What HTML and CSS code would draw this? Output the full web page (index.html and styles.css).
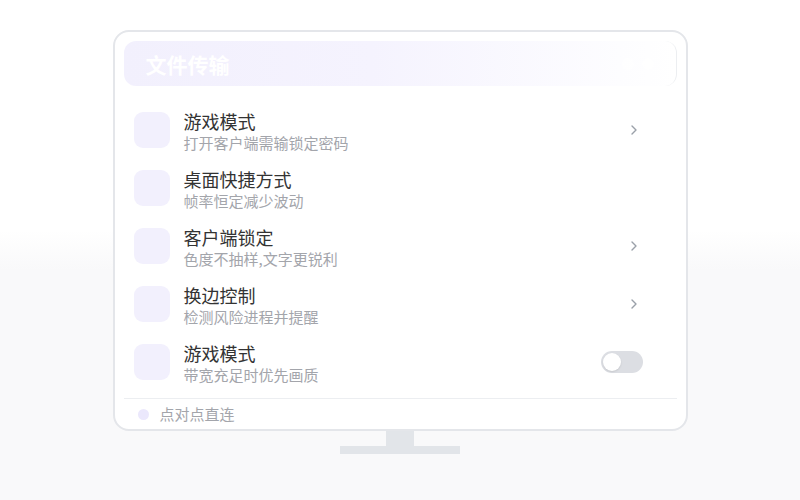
FILE: index.html
```html
<!DOCTYPE html>
<html lang="zh">
<head>
<meta charset="utf-8">
<title>文件传输</title>
<link rel="stylesheet" href="styles.css">
</head>
<body>
<div class="stage">
  <div class="monitor">
    <div class="header">
      <span class="title">文件传输</span>
      <span class="header-dots"><i></i><i></i></span>
    </div>
    <ul class="list">
      <li class="row">
        <span class="ico"></span>
        <span class="txt"><span class="t">游戏模式</span><span class="s">打开客户端需输锁定密码</span></span>
        <span class="chev"><svg width="8" height="12" viewBox="0 0 8 12"><path d="M2 2l4 4-4 4" fill="none" stroke="#9aa0a9" stroke-width="1.4" stroke-linecap="round" stroke-linejoin="round"/></svg></span>
      </li>
      <li class="row">
        <span class="ico"></span>
        <span class="txt"><span class="t">桌面快捷方式</span><span class="s">帧率恒定减少波动</span></span>
      </li>
      <li class="row">
        <span class="ico"></span>
        <span class="txt"><span class="t">客户端锁定</span><span class="s">色度不抽样,文字更锐利</span></span>
        <span class="chev"><svg width="8" height="12" viewBox="0 0 8 12"><path d="M2 2l4 4-4 4" fill="none" stroke="#9aa0a9" stroke-width="1.4" stroke-linecap="round" stroke-linejoin="round"/></svg></span>
      </li>
      <li class="row">
        <span class="ico"></span>
        <span class="txt"><span class="t">换边控制</span><span class="s">检测风险进程并提醒</span></span>
        <span class="chev"><svg width="8" height="12" viewBox="0 0 8 12"><path d="M2 2l4 4-4 4" fill="none" stroke="#9aa0a9" stroke-width="1.4" stroke-linecap="round" stroke-linejoin="round"/></svg></span>
      </li>
      <li class="row">
        <span class="ico"></span>
        <span class="txt"><span class="t">游戏模式</span><span class="s">带宽充足时优先画质</span></span>
        <span class="toggle"><span class="knob"></span></span>
      </li>
    </ul>
    <div class="footer">
      <span class="dot"></span>
      <span class="ftxt">点对点直连</span>
    </div>
  </div>
  <div class="neck"></div>
  <div class="base"></div>
</div>
</body>
</html>
```

FILE: styles.css
```css
html, body {
  margin: 0;
  padding: 0;
}
body {
  width: 800px;
  height: 500px;
  overflow: hidden;
  background: linear-gradient(to bottom, #ffffff 0%, #ffffff 46%, #f9f9fa 54%, #f9f9fa 100%);
  font-family: "Noto Sans CJK SC", "Noto Sans", sans-serif;
}
.stage {
  display: flex;
  flex-direction: column;
  align-items: center;
  padding-top: 30px;
}
.monitor {
  box-sizing: border-box;
  width: 575px;
  height: 401px;
  border: 2px solid #e4e6ea;
  border-radius: 16px;
  background: #fff;
  padding: 9px 9px 0 9px;
  display: flex;
  flex-direction: column;
}
.header {
  flex: none;
  height: 45px;
  border-radius: 12px;
  background: linear-gradient(to right, #f2f0fd 0%, #f5f3fe 45%, #fdfdff 90%, #ffffff 100%);
  display: flex;
  align-items: center;
  justify-content: space-between;
  padding: 0 0 0 22px;
  border-right: 1px solid #eceef1;
}
.title {
  color: #ffffff;
  font-size: 21px;
  font-weight: 700;
  line-height: 26px;
}
.header-dots {
  display: flex;
  gap: 8px;
  margin-right: 22px;
}
.header-dots i {
  width: 12px;
  height: 12px;
  border-radius: 50%;
  background: #ffffff;
  opacity: 0.6;
}
.list {
  list-style: none;
  margin: 0;
  padding: 26px 0 0 0;
  display: flex;
  flex-direction: column;
  gap: 18px;
}
.row {
  display: flex;
  align-items: flex-start;
  padding: 0 33px 0 10px;
  height: 40px;
}
.ico {
  width: 36px;
  height: 36px;
  border-radius: 9px;
  background: #f2f0fd;
  flex: none;
}
.txt {
  display: flex;
  flex-direction: column;
  margin-left: 14px;
  flex: 1;
  margin-top: -2px;
}
.t {
  font-size: 18px;
  line-height: 22px;
  color: #333333;
}
.s {
  font-size: 15px;
  line-height: 19px;
  color: #a3a5ab;
  margin-top: 1px;
}
.chev {
  display: flex;
  align-items: center;
  height: 36px;
  margin-right: 6px;
}
.toggle {
  position: relative;
  width: 42px;
  height: 22px;
  border-radius: 11px;
  background: #dcdee3;
  margin-top: 7px;
  margin-right: 1px;
}
.knob {
  position: absolute;
  left: 2px;
  top: 2px;
  width: 18px;
  height: 18px;
  border-radius: 50%;
  background: #ffffff;
  box-shadow: 0 1px 2px rgba(0,0,0,0.1);
}
.footer {
  margin-top: 14px;
  border-top: 1px solid #eceef1;
  display: flex;
  align-items: center;
  height: 33px;
  padding-left: 14px;
}
.dot {
  width: 11px;
  height: 11px;
  border-radius: 50%;
  background: #ebe8fc;
}
.ftxt {
  margin-left: 11px;
  font-size: 15px;
  color: #a3a5ab;
  line-height: 20px;
}
.neck {
  width: 28px;
  height: 15px;
  background: #e2e5e9;
}
.base {
  width: 120px;
  height: 8px;
  background: #e2e5e9;
}
```
